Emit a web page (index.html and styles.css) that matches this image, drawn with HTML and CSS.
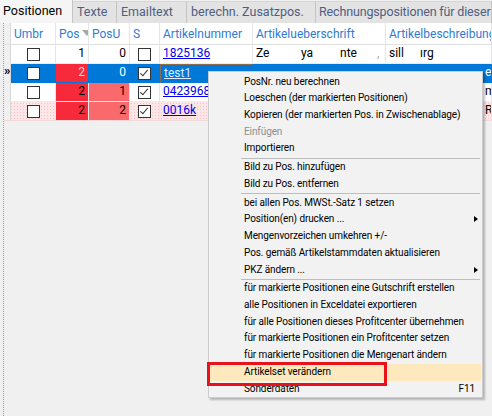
FILE: index.html
```html
<!DOCTYPE html>
<html>
<head>
<meta charset="utf-8">
<link rel="stylesheet" href="styles.css">
</head>
<body>
<div class="tabs">
  <div class="tab active w1">Positionen</div>
  <div class="tab w2">Texte</div>
  <div class="tab w3">Emailtext</div>
  <div class="tab w4">berechn. Zusatzpos.</div>
  <div class="tab w5">Rechnungspositionen für dieser</div>
</div>
<div class="grid">
  <div class="row head">
    <div class="c ind"></div>
    <div class="c">Umbr</div>
    <div class="c">Pos<span class="sort"></span></div>
    <div class="c">PosU</div>
    <div class="c">S</div>
    <div class="c">Artikelnummer</div>
    <div class="c">Artikelueberschrift</div>
    <div class="c">Artikelbeschreibung</div>
  </div>
  <div class="row r1">
    <div class="c ind"></div>
    <div class="c ctr"><span class="cb"></span></div>
    <div class="c num">1</div>
    <div class="c num">0</div>
    <div class="c ctr"><span class="cb"></span></div>
    <div class="c"><span class="link">1825136</span></div>
    <div class="c txt"><span class="g1">Ze</span><span class="g2">ya</span><span class="g3">nte</span><span class="g4">,</span></div>
    <div class="c txt"><span>sill</span><span class="g5">ırg</span></div>
  </div>
  <div class="row r2 sel">
    <div class="c ind"><span class="arrow">»</span></div>
    <div class="c ctr"><span class="cb white"></span></div>
    <div class="c num red">2</div>
    <div class="c num">0</div>
    <div class="c ctr"><span class="cb chk"></span></div>
    <div class="c focus"><span class="link">test1</span></div>
    <div class="c"></div>
    <div class="c txt"><span class="edge">e</span></div>
  </div>
  <div class="row r3">
    <div class="c ind"></div>
    <div class="c ctr"><span class="cb"></span></div>
    <div class="c num red">2</div>
    <div class="c num lred">1</div>
    <div class="c ctr"><span class="cb chk"></span></div>
    <div class="c"><span class="link">0423968</span></div>
    <div class="c"></div>
    <div class="c txt"><span class="edge">m</span></div>
  </div>
  <div class="row r4 pink">
    <div class="c ind"></div>
    <div class="c ctr"><span class="cb"></span></div>
    <div class="c num red">2</div>
    <div class="c num lred">2</div>
    <div class="c ctr"><span class="cb chk"></span></div>
    <div class="c"><span class="link">0016k</span></div>
    <div class="c"></div>
    <div class="c txt"><span class="edge">R</span></div>
  </div>
</div>

<div class="menu">
  <div class="mi">PosNr. neu berechnen</div>
  <div class="mi">Loeschen (der markierten Positionen)</div>
  <div class="mi">Kopieren (der markierten Pos. in Zwischenablage)</div>
  <div class="mi dis">Einfügen</div>
  <div class="mi">Importieren</div>
  <div class="sep"></div>
  <div class="mi">Bild zu Pos. hinzufügen</div>
  <div class="mi">Bild zu Pos. entfernen</div>
  <div class="sep"></div>
  <div class="mi">bei allen Pos. MWSt.-Satz 1 setzen</div>
  <div class="mi sub">Position(en) drucken ...</div>
  <div class="mi">Mengenvorzeichen umkehren +/-</div>
  <div class="mi">Pos. gemäß Artikelstammdaten aktualisieren</div>
  <div class="mi sub">PKZ ändern ...</div>
  <div class="sep"></div>
  <div class="mi">für markierte Positionen eine Gutschrift erstellen</div>
  <div class="mi">alle Positionen in Exceldatei exportieren</div>
  <div class="mi">für alle Positionen dieses Profitcenter übernehmen</div>
  <div class="mi">für markierte Positionen ein Profitcenter setzen</div>
  <div class="mi">für markierte Positionen die Mengenart ändern</div>
  <div class="mi hot">Artikelset verändern</div>
  <div class="mi"><span>Sonderdaten</span><span class="key">F11</span></div>
</div>
<div class="mark"></div>
</body>
</html>
```
FILE: styles.css
```css
html, body {
  margin: 0;
  padding: 0;
}
body {
  width: 492px;
  height: 416px;
  overflow: hidden;
  background: #f0f0f0;
  font-family: "Roboto", "Lato", sans-serif;
  font-size: 12px;
  color: #000;
  position: relative;
}
.tabs {
  display: flex;
  height: 23px;
  box-sizing: border-box;
  border-bottom: 1px solid #d9d9d9;
  background: #f0f0f0;
}
.tab {
  box-sizing: border-box;
  height: 22px;
  margin-top: 1px;
  padding: 2px 0 0 4px;
  background: #e3e3e3;
  border-right: 1px solid #c4c4c4;
  border-top: 1px solid #d6d6d6;
  color: #4d6082;
  font-size: 12.5px;
  white-space: nowrap;
  overflow: hidden;
}
.tab.active {
  background: #f5f5f5;
  color: #000;
  margin-top: 0;
  height: 23px;
  padding-left: 3px;
  padding-top: 3px;
  border-top: none;
}
.w1 { width: 73px; }
.w2 { width: 44px; }
.w3 { width: 70px; }
.w4 { width: 129px; }
.w5 { flex: 1; letter-spacing: -0.15px; padding-left: 3px; }

.grid {
  margin-left: 3px;
  border-left: 1px dotted #8fa0b3;
  height: 393px;
  box-sizing: border-box;
  background: #f0f0f0;
  overflow: hidden;
}
.row {
  display: grid;
  grid-template-columns: 7px 45px 33px 41px 30px 93px 133px 106px;
  height: 19px;
  background: #fff;
}
.row.head {
  height: 22px;
  background: #fff;
  color: #2f7bd2;
  font-size: 12px;
}
.c {
  box-sizing: border-box;
  border-right: 1px solid #e6e6e6;
  border-bottom: 1px solid #ececec;
  padding: 1px 0 0 3px;
  white-space: nowrap;
  overflow: hidden;
  position: relative;
}
.head .c {
  padding-top: 4px;
  border-bottom: 1px solid #e0e0e0;
}
.c.ind {
  background: #f0f0f0;
  padding: 0;
  border-right: 1px solid #d8d8d8;
}
.sort {
  display: inline-block;
  width: 0;
  height: 0;
  border-left: 5px solid transparent;
  border-right: 5px solid transparent;
  border-top: 6px solid #a7a7a7;
  margin-left: 2px;
  vertical-align: 2px;
}
.ctr {
  display: flex;
  justify-content: center;
  align-items: center;
  padding: 0;
}
.num {
  text-align: right;
  padding: 1px 3px 0 0;
  font-size: 12px;
}
.cb {
  width: 11px;
  height: 11px;
  border: 1px solid #333;
  background: #fff;
  display: block;
  position: relative;
}
.cb.chk::after {
  content: "";
  position: absolute;
  left: 3px;
  top: 0px;
  width: 3px;
  height: 7px;
  border-right: 1.4px solid #333;
  border-bottom: 1.4px solid #333;
  transform: rotate(40deg);
}
.link {
  color: #0000ee;
  text-decoration: underline;
  font-size: 12px;
}
.txt { font-size: 12px; }
.txt span { display: inline-block; }
.g1 { width: 45px; }
.g2 { width: 39px; }
.g3 { width: 37px; }
.g4 { color: #aaa; }
.g5 { margin-left: 16px; }
.edge { margin-left: 96px; }

.sel { background: #0078d7; color: #fff; }
.sel .c { border-right-color: #0078d7; border-bottom-color: #0078d7; }
.sel .c.ind { background: #f0f0f0; border-right-color: #d8d8d8; border-bottom-color: #ececec; }
.sel .link { color: #dfe9ff; }
.sel .red { color: #ffd8d8; }
.arrow {
  position: absolute;
  left: 0;
  top: -1px;
  font-size: 13px;
  font-weight: bold;
  color: #000;
}
.focus {
  border: 1px solid #8c6a4e;
}
.red { background: #f72a3c; }
.lred { background: #fa6a6d; }
.pink {
  background-color: #fce6e7;
  background-image: radial-gradient(#f3c3c6 0.6px, transparent 0.8px);
  background-size: 3px 3px;
}
.pink .c { border-bottom-color: #f3d6d6; }

.menu {
  position: absolute;
  left: 208px;
  top: 71px;
  width: 275px;
  height: 327px;
  box-sizing: border-box;
  background: #f2f2f2;
  border: 1px solid #cccccc;
  box-shadow: 2px 2px 2px rgba(0,0,0,0.25);
  padding: 1.6px 1px 0 0;
  overflow: hidden;
}
.mi {
  height: 16.72px;
  line-height: 16.72px;
  padding-left: 35px;
  padding-right: 6px;
  font-size: 10px;
  letter-spacing: -0.1px;
  white-space: nowrap;
  display: flex;
  justify-content: space-between;
  position: relative;
}
.mi.dis { color: #8d8d8d; }
.mi.hot { background: #fde9bd; }
.mi.sub::after {
  content: "";
  position: absolute;
  right: 3px;
  top: 5px;
  border-top: 3.5px solid transparent;
  border-bottom: 3.5px solid transparent;
  border-left: 4px solid #000;
}
.sep {
  height: 1px;
  margin: 0.5px 1px 0.5px 32px;
  background: #bdbdbd;
}
.mark {
  position: absolute;
  left: 207px;
  top: 362px;
  width: 180px;
  height: 24px;
  box-sizing: border-box;
  border: 3px solid #e8121a;
}
```
